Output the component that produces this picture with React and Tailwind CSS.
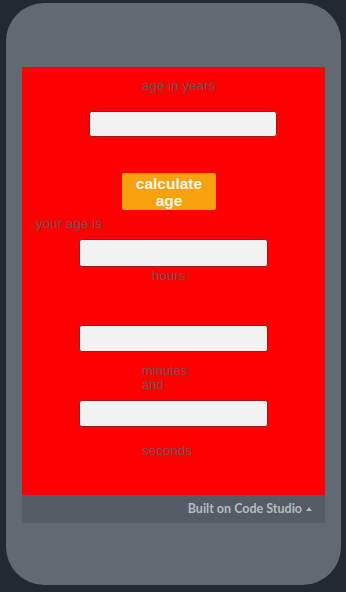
const Label = ({ className, children }) => (
  <div className={"text-[13.5px] leading-[16px] text-[#6c5259] " + className}>{children}</div>
)

const Field = ({ className }) => (
  <input
    type="text"
    className={"block bg-[#f2f2f2] border border-[#a11a1a] rounded-[3px] outline-none " + className}
  />
)

export default function App() {
  return (
    <div className="w-[346px] h-[592px] bg-[#1f2a32] pt-[3px] pl-[6px] overflow-hidden" style={{ fontFamily: '"Liberation Sans", Arial, sans-serif' }}>
      <div className="w-[335px] h-[582px] rounded-[38px] bg-[#5f6a72] pt-[64px] pl-[16px]">
        <div className="w-[303px] h-[428px] bg-[#ff0000]">
          <Label className="pt-[11px] pl-[120px]">age in years</Label>
          <Field className="ml-[67px] mt-[17px] w-[188px] h-[26px]" />
          <button className="block ml-[100px] mt-[36px] w-[94px] h-[37px] bg-[#f7a10c] rounded-[2px] text-[#fdf6ec] font-bold text-[15.5px] leading-[17px]">
            calculate<br />age
          </button>
          <Label className="pl-[14px] mt-[6px]">your age is</Label>
          <Field className="ml-[57px] mt-[7px] w-[189px] h-[28px]" />
          <Label className="pl-[130px] mt-[1px]">hours</Label>
          <Field className="ml-[57px] mt-[41px] w-[189px] h-[27px]" />
          <div className="pl-[120px] mt-[12px] text-[13px] leading-[14px] text-[#6c5259]">
            <div>minutes</div>
            <div>and</div>
          </div>
          <Field className="ml-[57px] mt-[8px] w-[189px] h-[27px]" />
          <Label className="pl-[120px] mt-[16px]">seconds</Label>
        </div>
        <div className="w-[303px] h-[28px] bg-[#535d65] flex items-center justify-end pr-[13px] text-[12.5px] font-bold text-[#b3bbc1]" style={{ fontFamily: 'Lato, "Open Sans", sans-serif' }}>
          Built on Code Studio
          <svg className="ml-[4px]" width="6" height="4" viewBox="0 0 6 4">
            <path d="M0 4 L3 0 L6 4 Z" fill="#b3bbc1" />
          </svg>
        </div>
      </div>
    </div>
  )
}
